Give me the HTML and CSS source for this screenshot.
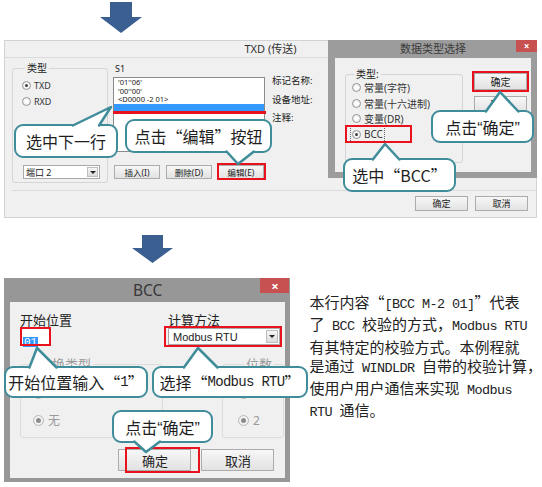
FILE: index.html
```html
<!DOCTYPE html>
<html lang="zh-CN">

<head>
    <meta charset="UTF-8">
    <title>BCC 校验设置</title>
    <link rel="stylesheet" href="styles.css">
</head>

<body>
    <div class="page">
        <div class="arrow-row top">
            <svg width="42" height="31" viewBox="0 0 42 31"><polygon points="10,0 32,0 32,15 42,15 21,31 0,15 10,15"/></svg>
        </div>

        <!-- TXD window with the data type dialog on top -->
        <div class="txd">
            <div class="txd-title">TXD (传送)</div>
            <div class="txd-main">
                <div class="txd-left">
                    <fieldset class="group type-group">
                        <legend>类型</legend>
                        <div class="opt"><span class="radio on"></span>TXD</div>
                        <div class="opt"><span class="radio"></span>RXD</div>
                        <div class="combo port">端口 2<span class="drop"></span></div>
                    </fieldset>
                </div>
                <div class="txd-mid">
                    <div class="cap">S1</div>
                    <div class="listbox">
                        <div>'01''06'</div>
                        <div>'00''00'</div>
                        <div>&lt;D0000 -2 01&gt;</div>
                        <div class="sel"></div>
                    </div>
                    <div class="btn-row">
                        <span class="btn">插入(I)</span>
                        <span class="btn">删除(D)</span>
                        <span class="btn">编辑(E)</span>
                    </div>
                </div>
                <div class="txd-fields">
                    <p>标记名称:</p>
                    <p>设备地址:</p>
                    <p>注释:</p>
                </div>
            </div>
            <div class="txd-foot">
                <span class="btn">确定</span>
                <span class="btn">取消</span>
            </div>

            <div class="dlg">
                <div class="dlg-title">数据类型选择</div>
                <span class="close">×</span>
                <div class="dlg-body">
                    <fieldset class="group kind-group">
                        <legend>类型:</legend>
                        <div class="opt"><span class="radio"></span>常量(字符)</div>
                        <div class="opt"><span class="radio"></span>常量(十六进制)</div>
                        <div class="opt"><span class="radio"></span>变量(DR)</div>
                        <div class="opt"><span class="focus"><span class="radio on"></span>BCC</span></div>
                    </fieldset>
                    <div class="dlg-btns">
                        <span class="btn">确定</span>
                        <span class="btn">取消</span>
                    </div>
                </div>
            </div>
        </div>

        <div class="arrow-row mid">
            <svg width="41" height="28" viewBox="0 0 41 28"><polygon points="10,0 31,0 31,13 41,13 20.5,28 0,13 10,13"/></svg>
        </div>

        <div class="lower">
            <div class="bcc">
                <div class="bcc-title">BCC</div>
                <span class="close">×</span>
                <div class="bcc-body">
                    <div class="bcc-row">
                        <div class="start">
                            <div class="lbl">开始位置</div>
                            <div class="input"><span class="hl">01</span></div>
                        </div>
                        <div>
                            <div class="lbl">计算方法</div>
                            <div class="combo method">Modbus RTU<span class="drop"></span></div>
                        </div>
                    </div>
                    <div class="bcc-row groups">
                        <fieldset class="group off conv">
                            <legend>转换类型</legend>
                            <div class="opt"><span class="radio big"></span>BIN→ASCII</div>
                            <div class="opt"><span class="radio big on"></span>无</div>
                        </fieldset>
                        <fieldset class="group off digits">
                            <legend>位数</legend>
                            <div class="opt"><span class="radio big"></span>1</div>
                            <div class="opt"><span class="radio big on"></span>2</div>
                        </fieldset>
                    </div>
                    <div class="bcc-foot">
                        <span class="btn">确定</span>
                        <span class="btn">取消</span>
                    </div>
                </div>
            </div>

            <p class="note">
                本行内容“<span class="en">[BCC M-2 01]</span>”代表<br>
                了<span class="en"> BCC </span>校验的方式，<span class="en">Modbus RTU</span><br>
                有其特定的校验方式。本例程就<br>
                是通过<span class="en"> WINDLDR </span>自带的校验计算，<br>
                使用户用户通信来实现<span class="en"> Modbus</span><br>
                <span class="en">RTU </span>通信。
            </p>
        </div>

        <!-- red highlight boxes -->
        <div class="mark line m-row"></div>
        <div class="mark m-edit"></div>
        <div class="mark m-ok1"></div>
        <div class="mark m-bcc"></div>
        <div class="mark m-start"></div>
        <div class="mark m-method"></div>
        <div class="mark m-ok2"></div>

        <!-- speech bubbles -->
        <div class="callout c-row">选中下一行</div>
        <div class="callout c-edit">点击“编辑”按钮</div>
        <div class="callout slim c-ok1">点击“确定”</div>
        <div class="callout c-bcc">选中“BCC”</div>
        <div class="callout c-start">开始位置输入“<span class="en">1</span>”</div>
        <div class="callout c-method">选择“<span class="en">Modbus RTU</span>”</div>
        <div class="callout slim c-ok2">点击“确定”</div>

        <svg class="tails" width="542" height="487" viewBox="0 0 542 487">
            <polygon points="70.9,126.5 111,107 98.4,126.5"/>
            <polyline points="72.9,125.5 111,107 99,125.5"/>
            <polygon points="225.7,150.5 238,164 255.2,150.5"/>
            <polyline points="226.6,151.5 238,164 253.9,151.5"/>
            <polygon points="485.2,112.5 500,92 519.4,112.5"/>
            <polyline points="485.9,111.5 500,92 518.4,111.5"/>
            <polygon points="372,160.5 385,144 400.3,160.5"/>
            <polyline points="372.8,159.5 385,144 399.4,159.5"/>
            <polygon points="29,368.5 37,348 57.5,368.5"/>
            <polyline points="29.4,367.5 37,348 56.5,367.5"/>
            <polygon points="183.2,368.5 198,348 218.5,368.5"/>
            <polyline points="183.9,367.5 198,348 217.5,367.5"/>
            <polygon points="133.2,440.5 146,452 161.3,440.5"/>
            <polyline points="134.3,441.5 146,452 160,441.5"/>
        </svg>
    </div>
</body>

</html>
```

FILE: styles.css
```css
* {
    box-sizing: border-box;
}

body {
    margin: 0;
    background: #fff;
    color: #222;
    font-family: "Noto Sans", "Noto Sans CJK SC", sans-serif;
}

.page {
    position: relative;
    width: 542px;
    height: 487px;
    overflow: hidden;
}

/* big down arrows */
.arrow-row svg {
    display: block;
    fill: #3c5f91;
}

.arrow-row.top {
    height: 40px;
    padding: 2px 0 0 100px;
}

.arrow-row.mid {
    height: 60px;
    padding: 17px 0 0 132px;
}

/* shared controls */
.group {
    margin: 0;
    min-width: 0;
    border: 1px solid #d5d5d5;
    border-radius: 3px;
}

.group legend {
    padding: 0 2px;
}

.opt {
    display: flex;
    align-items: center;
    color: #333;
    white-space: nowrap;
}

.radio {
    position: relative;
    flex: none;
    width: 9px;
    height: 9px;
    margin-right: 3px;
    border: 1px solid #979797;
    border-radius: 50%;
    background: radial-gradient(circle, #fff 30%, #dedede 100%);
}

.radio.on::after {
    content: "";
    position: absolute;
    left: 2px;
    top: 2px;
    width: 3px;
    height: 3px;
    border-radius: 50%;
    background: #3d3d3d;
}

.btn {
    display: flex;
    align-items: center;
    justify-content: center;
    background: linear-gradient(#f7f7f7, #e2e2e2);
    border: 1px solid #acacac;
    color: #222;
    white-space: nowrap;
}

.combo {
    position: relative;
    display: flex;
    align-items: center;
    background: #fff;
    border: 1px solid #a9a9a9;
    white-space: nowrap;
}

.drop {
    position: absolute;
    right: 1px;
    top: 1px;
    bottom: 1px;
    display: flex;
    align-items: center;
    justify-content: center;
    background: linear-gradient(#f6f6f6, #dcdcdc);
    border: 1px solid #bdbdbd;
}

.drop::after {
    content: "";
    border: 3px solid transparent;
    border-top-color: #222;
    border-bottom: 0;
}

.close {
    position: absolute;
    top: 0;
    display: flex;
    align-items: center;
    justify-content: center;
    background: #c75050;
    color: #fff;
    font-weight: bold;
}

/* TXD window */
.txd {
    position: relative;
    width: 533px;
    height: 178px;
    margin-left: 4px;
    background: #f0f0f0;
    border: 1px solid #d3d3d3;
}

.txd-title {
    height: 17px;
    border-bottom: 1px solid #dadada;
    text-align: center;
    font-size: 11px;
    line-height: 16px;
    color: #333;
}

.txd-main {
    display: flex;
    height: 132px;
    padding: 5px 0 0 7px;
    font-size: 9px;
}

.txd-left {
    width: 96px;
    margin-right: 5px;
}

.type-group {
    height: 120px;
    padding: 4px 0 0 9px;
}

.type-group legend {
    margin-left: 3px;
    font-size: 10px;
    line-height: 10px;
}

.type-group .opt {
    height: 16px;
}

.port {
    width: 77px;
    height: 14px;
    margin: 56px 0 0 1px;
    padding-left: 2px;
    font-size: 9px;
}

.port .drop {
    width: 11px;
}

.txd-mid {
    width: 153px;
}

.cap {
    height: 12px;
    padding-left: 2px;
    line-height: 12px;
}

.listbox {
    width: 152px;
    height: 75px;
    margin-top: 2px;
    padding-left: 4px;
    background: #fff;
    border: 1px solid #8b8b8b;
    font-size: 7.5px;
    line-height: 8.7px;
}

.listbox .sel {
    height: 7px;
    margin-left: -4px;
    background: #3399ff;
}

.btn-row {
    display: flex;
    gap: 6px;
    margin: 13px 0 0 1px;
}

.btn-row .btn {
    width: 46px;
    height: 14px;
    font-size: 8.5px;
}

.txd-fields {
    margin-left: 6px;
    padding-top: 12px;
    font-size: 9.5px;
}

.txd-fields p {
    margin: 0 0 6.5px;
    line-height: 12px;
}

.txd-foot {
    display: flex;
    justify-content: flex-end;
    gap: 7px;
    margin-left: 7px;
    padding: 5px 8px 0 0;
    border-top: 1px solid #dcdcdc;
}

.txd-foot .btn {
    width: 53px;
    height: 15px;
    font-size: 9px;
}

/* data type dialog */
.dlg {
    position: absolute;
    left: 323px;
    top: -1px;
    width: 209px;
    height: 138px;
    display: flex;
    flex-direction: column;
    padding: 0 6px 6px 7px;
    background: #9c9c9c;
}

.dlg-title {
    height: 18px;
    text-align: center;
    font-size: 11px;
    line-height: 18px;
    color: #3b3b3b;
}

.dlg .close {
    right: 0;
    width: 21px;
    height: 12px;
    font-size: 10px;
}

.dlg-body {
    flex: 1;
    display: flex;
    padding: 11px 0 0 10px;
    background: #f0f0f0;
    font-size: 10px;
}

.kind-group {
    width: 118px;
    height: 94px;
    padding: 1px 0 0 6px;
}

.kind-group legend {
    margin-left: 2px;
    font-size: 10px;
    line-height: 10px;
}

.kind-group .opt {
    height: 15.5px;
}

.focus {
    display: flex;
    align-items: center;
    outline: 1px dotted #666;
    outline-offset: 1px;
}

.dlg-btns {
    display: flex;
    flex-direction: column;
    gap: 6px;
    margin: 4px 0 0 11px;
}

.dlg-btns .btn {
    width: 53px;
    height: 17px;
    font-size: 10px;
}

/* BCC window */
.lower {
    display: flex;
    align-items: flex-start;
}

.bcc {
    position: relative;
    width: 294px;
    height: 204px;
    margin-left: 4px;
    display: flex;
    flex-direction: column;
    padding: 0 5px 4px 6px;
    background: #979797;
}

.bcc-title {
    height: 24px;
    text-align: center;
    font-size: 15.5px;
    line-height: 24px;
    color: #383838;
}

.bcc .close {
    right: 1px;
    width: 29px;
    height: 15px;
    font-size: 13px;
}

.bcc-body {
    flex: 1;
    padding: 10px 0 0 10px;
    background: #f0f0f0;
    font-size: 13px;
}

.bcc-row {
    display: flex;
}

.lbl {
    line-height: 16px;
}

.start {
    width: 148px;
}

.input {
    width: 29px;
    height: 17px;
    margin-left: 1px;
    padding: 2px 0 0 1px;
    background: #fff;
    border: 1px solid #abadb3;
}

.input .hl {
    display: inline-block;
    padding: 0 1px;
    background: #3399ff;
    color: #fff;
    font-family: "Liberation Mono", monospace;
    font-size: 11px;
    line-height: 10px;
}

.method {
    width: 112px;
    height: 17px;
    padding-left: 4px;
    font-family: "Liberation Sans", sans-serif;
    font-size: 11px;
}

.method .drop {
    width: 12px;
}

.groups {
    margin-top: 12px;
}

.group.off {
    border-color: #dcdcdc;
    color: #9a9a9a;
}

.group.off legend {
    font-size: 13px;
    line-height: 14px;
}

.group.off .opt {
    height: 20px;
    color: #9a9a9a;
    font-size: 12px;
}

.group.off .opt + .opt {
    margin-top: 7px;
}

.radio.big {
    width: 11px;
    height: 11px;
    margin-right: 4px;
    border-color: #b9b9b9;
}

.radio.big.on::after {
    left: 2px;
    top: 2px;
    width: 5px;
    height: 5px;
    background: #8c8c8c;
}

.conv {
    width: 143px;
    height: 81px;
    padding: 12px 0 0 12px;
}

.conv legend {
    margin-left: 4px;
}

.digits {
    width: 62px;
    height: 81px;
    margin-left: 59px;
    padding: 12px 0 0 15px;
}

.digits legend {
    margin-left: 6px;
}

.bcc-foot {
    display: flex;
    justify-content: flex-end;
    gap: 10px;
    margin-top: 11px;
    padding-right: 11px;
}

.bcc-foot .btn {
    width: 73px;
    height: 22px;
    font-size: 13px;
}

/* explanation text */
.note {
    margin: 14px 0 0 19px;
    font-family: "Noto Sans CJK SC", sans-serif;
    font-size: 15px;
    line-height: 19.3px;
    color: #222;
    white-space: nowrap;
}

.en {
    font-family: "Liberation Mono", monospace;
    font-size: 13.5px;
    letter-spacing: -0.6px;
}

/* red highlight boxes */
.mark {
    position: absolute;
    border: 2px solid #e8121c;
}

.mark.line {
    border: 0;
    background: #e8121c;
}

.m-row { left: 113px; top: 111px; width: 153px; height: 2.5px; }
.m-edit { left: 217px; top: 163px; width: 49px; height: 17px; }
.m-ok1 { left: 472px; top: 71px; width: 57px; height: 21px; }
.m-bcc { left: 345px; top: 125px; width: 67px; height: 18px; }
.m-start { left: 20px; top: 327px; width: 31px; height: 19px; }
.m-method { left: 164px; top: 326px; width: 118px; height: 21px; }
.m-ok2 { left: 125px; top: 447px; width: 75px; height: 26px; }

/* speech bubbles */
.callout {
    position: absolute;
    display: flex;
    align-items: center;
    justify-content: center;
    background: #fff;
    border: 2.5px solid #3f8c9a;
    border-radius: 9px;
    font-family: "Noto Sans CJK SC", sans-serif;
    font-size: 16px;
    color: #1e1e1e;
    white-space: nowrap;
}

.callout.slim {
    font-family: "Liberation Sans", "Noto Sans CJK SC", sans-serif;
}

.callout .en {
    font-size: 14px;
    letter-spacing: -0.7px;
}

.c-row { left: 14px; top: 124px; width: 104px; height: 34px; }
.c-edit { left: 125px; top: 119px; width: 147px; height: 34px; }
.c-ok1 { left: 431px; top: 110px; width: 103px; height: 33px; }
.c-bcc { left: 343px; top: 158px; width: 113px; height: 34px; }
.c-start { left: 4px; top: 366px; width: 144px; height: 32px; }
.c-method { left: 152px; top: 366px; width: 156px; height: 32px; }
.c-ok2 { left: 112px; top: 410px; width: 101px; height: 33px; }

.tails {
    position: absolute;
    left: 0;
    top: 0;
}

.tails polygon {
    fill: #fff;
}

.tails polyline {
    fill: none;
    stroke: #3f8c9a;
    stroke-width: 2.5;
    stroke-linejoin: round;
    stroke-linecap: round;
}
```
